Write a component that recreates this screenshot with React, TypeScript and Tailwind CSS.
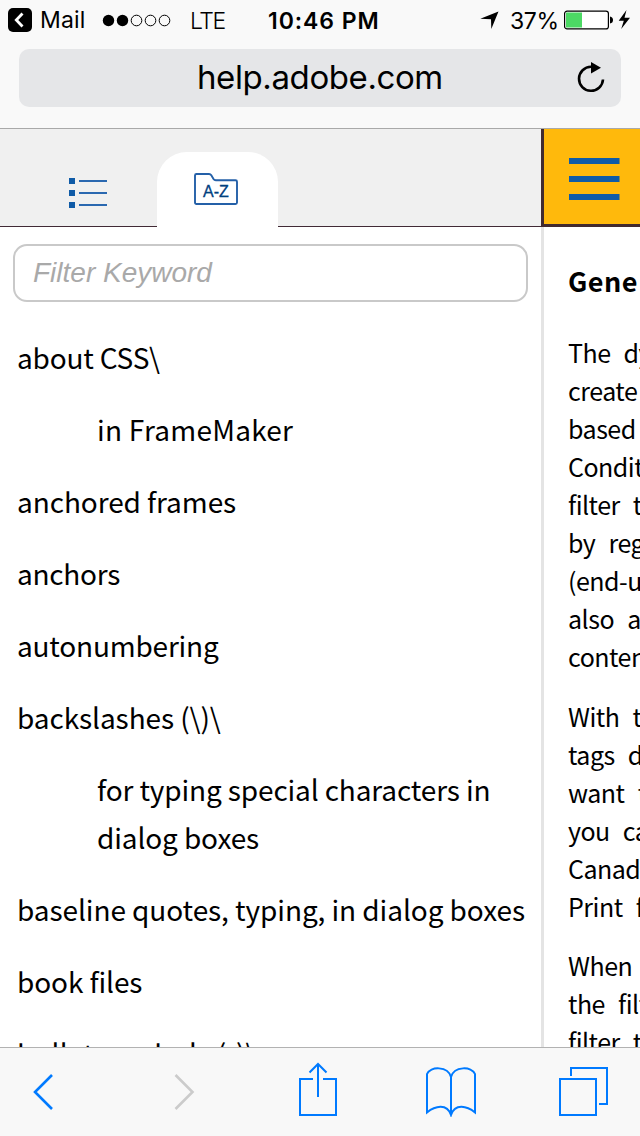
const adobe = "font-['Noto_Sans_CJK_JP','Noto_Sans',sans-serif]";

type Entry = { lines: string[]; nested?: boolean; tracking: string };

const entries: Entry[] = [
  { lines: ['about CSS\\'], tracking: 'tracking-[-0.2px]' },
  { lines: ['in FrameMaker'], nested: true, tracking: 'tracking-[0.25px]' },
  { lines: ['anchored frames'], tracking: 'tracking-[-0.08px]' },
  { lines: ['anchors'], tracking: 'tracking-[-0.25px]' },
  { lines: ['autonumbering'], tracking: 'tracking-[-0.2px]' },
  { lines: ['backslashes (\\)\\'], tracking: 'tracking-[-0.08px]' },
  { lines: ['for typing special characters in', 'dialog boxes'], nested: true, tracking: 'tracking-[-0.13px]' },
  { lines: ['baseline quotes, typing, in dialog boxes'], tracking: 'tracking-[-0.08px]' },
  { lines: ['book files'], tracking: 'tracking-[-0.1px]' },
  { lines: ['bullet symbols (•)\\'], tracking: 'tracking-[0.15px]' },
];

const paragraphs: string[][] = [
  ['The dy', 'create', 'based', 'Condit', 'filter t', 'by reg', '(end-u', 'also a', 'conten'],
  ['With t', 'tags d', 'want t', 'you ca', 'Canad', 'Print f'],
  ['When', 'the filt', 'filter t'],
];

function StatusBar() {
  return (
    <div className="flex h-[40px] items-center whitespace-nowrap text-[23px] leading-[40px]">
      <svg className="ml-[8px] shrink-0" width="24" height="24" viewBox="0 0 24 24">
        <rect width="24" height="24" rx="5" />
        <path d="M14.5 5.5 8.3 12l6.2 6.5" fill="none" stroke="#fff" strokeWidth="2.8" />
      </svg>
      <span className="ml-[8px] w-[62px] shrink-0 tracking-[0.2px]">Mail</span>
      <svg className="shrink-0" width="70" height="14" viewBox="0 0 70 14">
        <circle cx="6.5" cy="7.500" r="5.7" />
        <circle cx="20.5" cy="7.500" r="5.7" />
        <g fill="none" stroke="#000" strokeWidth="1">
          <circle cx="34.5" cy="7.500" r="5.3" />
          <circle cx="48.5" cy="7.500" r="5.3" />
          <circle cx="62.5" cy="7.500" r="5.3" />
        </g>
      </svg>
      <span className="ml-[18px] mt-[1px] w-[78px] shrink-0 font-light tracking-[-1.5px]">LTE</span>
      <span className="mt-[1px] w-[212px] shrink-0 font-semibold tracking-[0.95px]">10:46 PM</span>
      <svg className="shrink-0" width="19" height="19" viewBox="0 0 19 19">
        <path d="M18.5.5 11.3 18 11 8.3.3 7.8Z" />
      </svg>
      <span className="ml-[11px] mt-[1px] w-[54px] shrink-0 tracking-[-0.4px]">37%</span>
      <svg className="shrink-0" width="68" height="20" viewBox="0 0 68 20">
        <rect x=".6" y="1.100" width="43.8" height="17.8" rx="2.5" fill="#fff" stroke="#000" strokeWidth="1.2" />
        <rect x="2" y="2.500" width="16" height="15" fill="#4cd964" />
        <path d="M46 6.500q3 .5 3 3.500t-3 3.500Z" />
        <path d="M62.500 0 54.700 10.800H59.800L57.200 19 66 7.800H60.500Z" />
      </svg>
    </div>
  );
}

function AddressBar() {
  return (
    <div className="mx-[19px] mt-[9px] flex h-[58px] items-center rounded-[10px] bg-[#e5e6e8]">
      <span className="ml-[178px] w-[380px] whitespace-nowrap pb-[2px] text-[33px] leading-[56px] tracking-[-0.4px]">help.adobe.com</span>
      <svg className="shrink-0" width="28" height="32" viewBox="0 0 28 32">
        <path d="M14 4.300A12 12 0 1 0 26 17" fill="none" stroke="#000" strokeWidth="2.600" transform="translate(0 .5)" />
        <path d="M14 0 24 5.800 14 11.500Z" />
      </svg>
    </div>
  );
}

function Tabs() {
  return (
    <div className="flex h-[98px] items-end border-b border-[#412a35] bg-[#f0f0f0]">
      <div className="flex h-[74px] w-[157px] justify-start pl-[68px] pt-[25px]">
        <svg width="40" height="31" viewBox="0 0 40 31">
          <g fill="#0f5ba7">
            <rect x="1" y="1" width="6" height="6" />
            <rect x="1" y="13" width="6" height="6" />
            <rect x="1" y="25" width="6" height="6" />
          </g>
          <path d="M11 4H39M11 16H39M11 28H39" stroke="#2a68b0" strokeWidth="2" />
        </svg>
      </div>
      <div className="-mb-px flex h-[75px] w-[121px] justify-center rounded-t-[30px] bg-white pt-[20px]">
        <svg className="-ml-[3px]" width="44" height="34" viewBox="0 0 44 34">
          <path d="M1 3.500Q1 2 2.500 2H15Q16.500 2 17.300 3.300L19.500 7Q20.300 8.200 21.800 8.200H41.500Q43 8.200 43 9.700V30.500Q43 32 41.500 32H2.500Q1 32 1 30.500Z" fill="none" stroke="#2460a8" strokeWidth="1.900" />
          <text x="22" y="25" textAnchor="middle" fill="#00407f" stroke="#00407f" strokeWidth=".3" fontSize="16" fontFamily="Liberation Sans, sans-serif">A-Z</text>
        </svg>
      </div>
    </div>
  );
}

function KeywordIndex() {
  return (
    <section className="w-[541px] shrink-0 overflow-hidden">
      <Tabs />
      <div className="ml-[13px] mt-[17px] flex h-[58px] w-[515px] items-center rounded-[14px] border-2 border-[#c9c9c9] pl-[18px]">
        <span className="font-['Liberation_Sans',sans-serif] text-[28px] italic leading-[54px] text-[#a9a9a9]">Filter Keyword</span>
      </div>
      <ul className={`${adobe} mt-[31px] flex flex-col gap-[24px] pl-[17px] text-[28px] leading-[48px]`}>
        {entries.map((entry) => (
          <li key={entry.lines[0]} className={`whitespace-nowrap ${entry.tracking} ${entry.nested ? 'pl-[80px]' : ''}`}>
            {entry.lines.map((line) => (
              <div key={line}>{line}</div>
            ))}
          </li>
        ))}
      </ul>
    </section>
  );
}

function Article() {
  return (
    <section className="flex w-[99px] shrink-0 flex-col overflow-hidden">
      <div className="flex h-[98px] shrink-0 border-b-[3px] border-l-[3px] border-[#412a2f] bg-[#ffb90c] pl-[25px] pt-[29px]">
        <svg width="51" height="44" viewBox="0 0 51 44">
          <path d="M0 3H50.500M0 21H50.500M0 39H50.500" stroke="#0f5ba7" strokeWidth="6" />
        </svg>
      </div>
      <div className={`${adobe} flex-1 border-l-[3px] border-[#e4e4e4] pl-[24px] pt-[35px]`}>
        <h1 className="whitespace-nowrap text-[27px] font-bold leading-[38px] tracking-[0.5px]">Gene</h1>
        <div className="mt-[33px] flex flex-col gap-[21.5px] text-[25px] leading-[38px]">
          {paragraphs.map((lines) => (
            <div key={lines[0]}>
              {lines.map((line) => (
                <div key={line} className="whitespace-nowrap tracking-[-0.5px] [word-spacing:8px]">{line}</div>
              ))}
            </div>
          ))}
        </div>
      </div>
    </section>
  );
}

function Toolbar() {
  return (
    <nav className="flex h-[89px] shrink-0 border-t border-[#b2b2b2] bg-[#f8f8f8] text-[#007aff]">
      <svg className="ml-[32px] mt-[25px] shrink-0" width="22" height="38" viewBox="0 0 22 38">
        <path d="M20 2 3 19 20 36" fill="none" stroke="currentColor" strokeWidth="2.600" />
      </svg>
      <svg className="ml-[120px] mt-[25px] shrink-0" width="22" height="38" viewBox="0 0 22 38">
        <path d="M1.500 2 18.500 19 1.500 36" fill="none" stroke="#cbcbcb" strokeWidth="2.600" />
      </svg>
      <svg className="ml-[102px] mt-[14px] shrink-0" width="40" height="56" viewBox="0 0 40 56">
        <path d="M15 17H2V53H38V17H25M20 35V2.500M11.500 10.500 20 2 28.500 10.500" fill="none" stroke="currentColor" strokeWidth="2" />
      </svg>
      <svg className="ml-[87px] mt-[19px] shrink-0" width="52" height="50" viewBox="0 0 52 50">
        <path d="M26 10C23 -1 5 -1 2 7V45.500C10 39 22 36 26 48C30 36 42 39 50 45.500V7C47 -1 29 -1 26 10V48" fill="none" stroke="currentColor" strokeWidth="2" />
      </svg>
      <svg className="ml-[80px] mt-[18px] shrink-0" width="52" height="52" viewBox="0 0 52 52">
        <path d="M3 13H39V49H3ZM14 10V2H50V38H42" fill="none" stroke="currentColor" strokeWidth="2" />
      </svg>
    </nav>
  );
}

export default function App() {
  return (
    <div className="flex h-[1136px] w-[640px] flex-col overflow-hidden bg-white font-['Inter',sans-serif] text-black">
      <header className="h-[129px] shrink-0 border-b border-[#a9a9a9] bg-[#f9f9f9]">
        <StatusBar />
        <AddressBar />
      </header>
      <main className="flex h-[918px] shrink-0 overflow-hidden">
        <KeywordIndex />
        <Article />
      </main>
      <Toolbar />
    </div>
  );
}
